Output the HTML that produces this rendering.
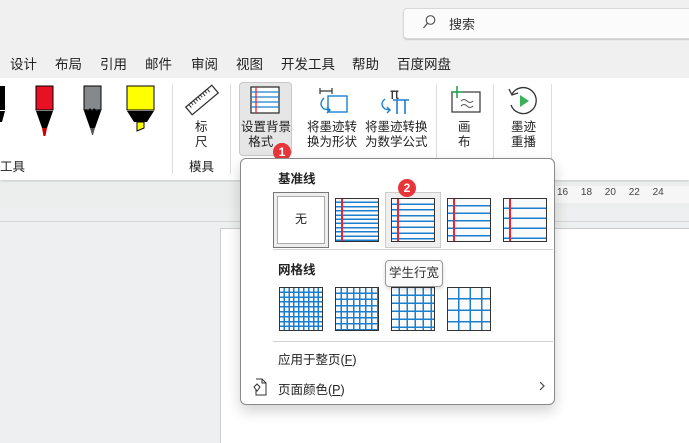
<!DOCTYPE html>
<html><head><meta charset="utf-8"><style>
*{margin:0;padding:0;box-sizing:border-box}
body{width:689px;height:443px;overflow:hidden;background:#eeeff0;font-family:"Liberation Sans","Noto Sans CJK SC",sans-serif;font-size:12px;color:#222;position:relative}
.a{position:absolute;white-space:nowrap}
.top{left:0;top:0;width:689px;height:78px;background:#f0f0f0}
.search{left:403px;top:8px;width:290px;height:31px;background:#fbfbfb;border:1px solid #d8d8d8;border-radius:4px;box-shadow:0 1px 1px #ccc}
.tab{top:53px;font-size:13.5px;color:#222}
.ribbon{left:0;top:78px;width:689px;height:102px;background:#fff;box-shadow:0 2px 3px rgba(0,0,0,.12)}
.div{width:1px;background:#ddd;top:84px;height:90px}
.lbl{font-size:12.5px;text-align:center;line-height:15px;color:#222}
.menu{left:240px;top:158px;width:315px;height:247px;background:#fff;border:1px solid #8a8a8a;border-radius:6px;box-shadow:0 6px 14px rgba(0,0,0,.18)}
.th{width:44px;height:44px;border:1.5px solid #333;background:#fafafa}
.ln{background-image:repeating-linear-gradient(to bottom,transparent 0,transparent var(--g),#1a7fcf var(--g),#1a7fcf calc(var(--g) + 1.5px))}
.grid{background-image:repeating-linear-gradient(to bottom,transparent 0,transparent var(--g),#1a7fcf var(--g),#1a7fcf calc(var(--g) + 1.5px)),repeating-linear-gradient(to right,transparent 0,transparent var(--g),#1a7fcf var(--g),#1a7fcf calc(var(--g) + 1.5px))}
.red{position:absolute;top:0;bottom:0;width:1.5px;background:#e23;left:5px}
.badge{width:18px;height:18px;border-radius:50%;background:#e8353a;color:#fff;font-size:12px;font-weight:bold;text-align:center;line-height:18px}
</style></head><body>
<div class="a top"></div>
<div class="a search"></div>
<svg class="a" style="left:422px;top:14px" width="14" height="16" viewBox="0 0 14 16"><circle cx="8.5" cy="6" r="4.3" fill="none" stroke="#555" stroke-width="1.2"/><path d="M5.5 9.2 L1.5 14" stroke="#555" stroke-width="1.3"/></svg>
<div class="a" style="left:449px;top:14px;font-size:13px;color:#333">搜索</div>
<div class="a tab" style="left:10px">设计</div>
<div class="a tab" style="left:55px">布局</div>
<div class="a tab" style="left:100px">引用</div>
<div class="a tab" style="left:145px">邮件</div>
<div class="a tab" style="left:191px">审阅</div>
<div class="a tab" style="left:236px">视图</div>
<div class="a tab" style="left:281px">开发工具</div>
<div class="a tab" style="left:352px">帮助</div>
<div class="a tab" style="left:397px">百度网盘</div>

<div class="a ribbon"></div>
<svg class="a" style="left:0;top:84px" width="160" height="56" viewBox="0 0 160 56">
<rect x="-2" y="2" width="7" height="24" fill="#000"/><path d="M-2 27 H5 L2 38 H-2Z" fill="#000"/>
<rect x="36" y="2" width="17" height="24" fill="#e81123" stroke="#000"/><path d="M36 27 H53 L47 44 H42Z" fill="#000"/><path d="M42 44 H47 L45.5 52 H43.5Z" fill="#c00"/>
<rect x="84" y="2" width="17" height="24" fill="#85898b" stroke="#000"/><path d="M84 27 L86 25 L88 27 L90 24 L92 27 L94 24 L97 27 L99 25 L101 27 L95 44 H90Z" fill="#000"/><path d="M90 44 H95 L93 51 H92Z" fill="#555"/>
<rect x="127" y="2" width="27" height="24" fill="#ff0" stroke="#000"/><path d="M127 27 H154 L147 38 H134Z" fill="#000"/><path d="M137 38 H144 L144 44 L137 47Z" fill="#ff0" stroke="#000"/>
</svg>
<div class="a lbl" style="left:0;top:160px">工具</div>
<div class="a div" style="left:172px"></div>
<svg class="a" style="left:183px;top:83px" width="38" height="34" viewBox="0 0 38 34"><g transform="rotate(-40 19 17)"><rect x="2" y="12" width="34" height="10" fill="#fff" stroke="#333" stroke-width="1.3"/><path d="M6 12v4M9 12v3M12 12v4M15 12v3M18 12v4M21 12v3M24 12v4M27 12v3M30 12v4" stroke="#333"/></g></svg>
<div class="a lbl" style="left:195px;top:120px">标<br>尺</div>
<div class="a lbl" style="left:189px;top:160px">模具</div>
<div class="a div" style="left:230px"></div>
<div class="a" style="left:239px;top:82px;width:53px;height:74px;background:#e6e6e6;border:1px solid #c8c8c8;border-radius:4px"></div>
<svg class="a" style="left:250px;top:86px" width="30" height="28" viewBox="0 0 30 28"><rect x="1" y="1" width="28" height="26" fill="#fff" stroke="#333" stroke-width="1.3"/><path d="M1 6H29M1 11H29M1 16H29M1 21H29" stroke="#1a7fcf" stroke-width="1.2"/><path d="M6 1V27" stroke="#e23" stroke-width="1.3"/></svg>
<div class="a lbl" style="left:241px;top:120px">设置背景<br>&nbsp;格式 ⌄</div>
<div class="a badge" style="left:273px;top:143px">1</div>
<svg class="a" style="left:316px;top:86px" width="34" height="32" viewBox="0 0 34 32"><path d="M4 2V8M16 2V8M4 5H16" stroke="#333" stroke-width="1.2" fill="none"/><rect x="12" y="10" width="19" height="16" fill="none" stroke="#1a7fcf" stroke-width="1.4"/><path d="M8 12 Q2 18 8 23 L14 24 M11 21 L14 24 L11 27" stroke="#1a7fcf" stroke-width="1.4" fill="none"/></svg>
<div class="a lbl" style="left:307px;top:120px">将墨迹转<br>换为形状</div>
<svg class="a" style="left:377px;top:86px" width="40" height="32" viewBox="0 0 40 32"><text x="13" y="13" font-size="15" fill="#333" font-family="DejaVu Sans">π</text><path d="M8 13 Q2 18 8 23 L13 24 M10 21 L13 24 L10 27" stroke="#1a7fcf" stroke-width="1.4" fill="none"/><path d="M16 14H32M20 14V28M28 14V28" stroke="#1a7fcf" stroke-width="1.6"/></svg>
<div class="a lbl" style="left:365px;top:120px">将墨迹转换<br>为数学公式</div>
<div class="a div" style="left:436px"></div>
<svg class="a" style="left:448px;top:84px" width="34" height="32" viewBox="0 0 34 32"><rect x="4" y="8" width="28" height="20" fill="#fff" stroke="#333" stroke-width="1.2"/><path d="M3 8H15M9 2V14" stroke="#2aa452" stroke-width="1.6"/><path d="M13 17 q3-3 6 0 t6 0M13 22 q3-3 6 0 t6 0" stroke="#555" fill="none"/></svg>
<div class="a lbl" style="left:458px;top:120px">画<br>布</div>
<div class="a div" style="left:493px"></div>
<svg class="a" style="left:506px;top:85px" width="34" height="32" viewBox="0 0 34 32"><path d="M6 9 A13 13 0 1 1 5 20" stroke="#333" stroke-width="1.3" fill="none"/><path d="M3 4 L6 10 L12 8" stroke="#333" stroke-width="1.3" fill="none"/><path d="M14 10 L23 16 L14 22Z" fill="#3bb15a"/></svg>
<div class="a lbl" style="left:511px;top:120px">墨迹<br>重播</div>
<div class="a div" style="left:551px"></div>

<div class="a" style="left:0;top:182px;width:689px;height:26px;background:#eceded"></div>
<div class="a" style="left:555px;top:186px;width:134px;height:17px;background:#f6f6f6"></div>
<div class="a" style="left:557px;top:187px;font-size:10px;color:#444;word-spacing:10px">16 18 20 22 24</div>
<div class="a" style="left:0;top:221px;width:689px;height:1px;background:#d6d6d6"></div>
<div class="a" style="left:220px;top:228px;width:469px;height:215px;background:#fff;border-left:1px solid #ccc;border-top:1px solid #ccc"></div>

<div class="a menu"></div>
<div class="a" style="left:278px;top:168px;font-weight:bold;font-size:12.5px">基准线</div>
<div class="a" style="left:273px;top:192px;width:56px;height:56px;border:1.5px solid #777;background:#eee"></div>
<div class="a" style="left:277px;top:196px;width:48px;height:48px;border:1.5px solid #aaa;background:#fff;text-align:center;line-height:44px;font-size:12px">无</div>
<div class="a th ln" style="left:335px;top:198px;--g:2.7px"><div class="red"></div></div>
<div class="a" style="left:385px;top:192px;width:56px;height:56px;border:1px solid #ccc;background:#efefef"></div>
<div class="a th ln" style="left:391px;top:198px;--g:4.3px"><div class="red"></div></div>
<div class="a th ln" style="left:447px;top:198px;--g:6px"><div class="red"></div></div>
<div class="a th ln" style="left:503px;top:198px;--g:8.5px"><div class="red"></div></div>
<div class="a badge" style="left:398px;top:179px">2</div>
<div class="a" style="left:273px;top:249px;width:280px;height:1px;background:#d0d0d0"></div>
<div class="a" style="left:278px;top:259px;font-weight:bold;font-size:12.5px">网格线</div>
<div class="a th grid" style="left:279px;top:287px;--g:3.4px"></div>
<div class="a th grid" style="left:335px;top:287px;--g:4.6px"></div>
<div class="a th grid" style="left:391px;top:287px;--g:6.5px"></div>
<div class="a th grid" style="left:447px;top:287px;--g:10px"></div>
<div class="a" style="left:385px;top:260px;width:58px;height:27px;background:#fafafa;border:1px solid #999;border-radius:4px;box-shadow:0 2px 4px rgba(0,0,0,.15);font-size:12.5px;line-height:25px;text-align:center;color:#333">学生行宽</div>
<div class="a" style="left:273px;top:341px;width:280px;height:1px;background:#d0d0d0"></div>
<div class="a" style="left:278px;top:349px;font-size:12.5px">应用于整页(<u>F</u>)</div>
<svg class="a" style="left:252px;top:378px" width="16" height="18" viewBox="0 0 16 18"><path d="M4 1H10L14 5V17H4V12" fill="none" stroke="#333"/><path d="M10 1V5H14" fill="none" stroke="#333"/><path d="M2 9 L5 6 L8 9 L5 13Z" fill="none" stroke="#333"/></svg>
<div class="a" style="left:278px;top:379px;font-size:12.5px">页面颜色(<u>P</u>)</div>
<svg class="a" style="left:538px;top:380px" width="8" height="12" viewBox="0 0 8 12"><path d="M2 2 L6 6 L2 10" fill="none" stroke="#444" stroke-width="1.2"/></svg>
</body></html>
